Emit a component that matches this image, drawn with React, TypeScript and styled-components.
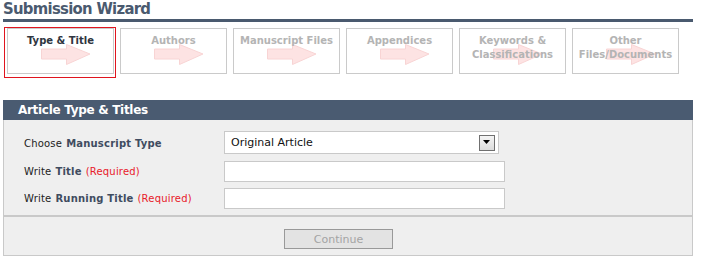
import React from 'react';
import styled, { createGlobalStyle } from 'styled-components';

const GlobalStyle = createGlobalStyle`
  body {
    margin: 0;
    background: #ffffff;
    font-family: 'DejaVu Sans', Verdana, sans-serif;
    font-size: 11px;
  }
`;

const Page = styled.div`
  width: 690px;
  margin-left: 3px;
`;

const Heading = styled.h1`
  margin: 0;
  height: 19px;
  font-family: 'DejaVu Sans Condensed', 'DejaVu Sans', sans-serif;
  font-size: 16.5px;
  line-height: 18px;
  font-weight: bold;
  color: #4a5a6f;
  border-bottom: 3px solid #4a5a6f;
  letter-spacing: -0.7px;
`;

const TabRow = styled.div`
  display: flex;
  gap: 6px;
  padding: 6px 0 0 4px;
  height: 46px;
`;

const Tab = styled.div<{ $active?: boolean }>`
  position: relative;
  box-sizing: border-box;
  width: 107px;
  height: 46px;
  border: 1px solid #cacaca;
  padding-top: 5px;
  text-align: center;
  font-weight: bold;
  font-size: 10px;
  line-height: 14px;
  color: ${(p) => (p.$active ? '#2f3540' : '#b4b4b4')};

  &::before {
    content: '';
    display: ${(p) => (p.$active ? 'block' : 'none')};
    position: absolute;
    left: -4px;
    top: -2px;
    right: -3px;
    bottom: -5px;
    border: 1px solid #e0141e;
  }
`;

const Arrow = styled.svg`
  position: absolute;
  left: 33px;
  top: 15px;
`;

const Label = styled.span`
  position: relative;
`;

const Section = styled.div`
  margin-top: 26px;
  border: 1px solid #c9c9c9;
  border-top: none;
  background: #efefef;
`;

const SectionHeader = styled.div`
  height: 20px;
  margin: 0 -1px;
  padding-left: 15px;
  background: #4a5b71;
  color: #ffffff;
  font-size: 12px;
  font-weight: bold;
  line-height: 20px;
  letter-spacing: -0.3px;
`;

const Form = styled.div`
  display: grid;
  grid-template-columns: 200px auto;
  row-gap: 6px;
  padding: 11px 0 6px 20px;
  border-bottom: 2px solid #c9c9c9;
`;

const FieldLabel = styled.div`
  display: flex;
  align-items: center;
  color: #222;
  font-size: 10px;
  letter-spacing: 0.2px;
`;

const Strong = styled.b`
  color: #3f4c60;
  margin-left: 4px;
`;

const Required = styled.span`
  color: #e8202a;
  margin-left: 4px;
`;

const Select = styled.div`
  box-sizing: border-box;
  display: flex;
  align-items: center;
  justify-content: space-between;
  width: 275px;
  height: 23px;
  margin-bottom: 1px;
  padding: 0 3px 0 6px;
  background: #fff;
  border: 1px solid #c9c9c9;
  font-size: 11px;
  color: #111;
`;

const DropButton = styled.div`
  box-sizing: border-box;
  display: flex;
  align-items: center;
  justify-content: center;
  width: 16px;
  height: 16px;
  border: 1px solid #707070;
  background: linear-gradient(#f4f4f4, #dcdcdc);
`;

const TextInput = styled.div`
  box-sizing: border-box;
  width: 281px;
  height: 21px;
  background: #fff;
  border: 1px solid #c9c9c9;
`;

const Footer = styled.div`
  display: flex;
  justify-content: center;
  padding: 12px 0 6px;
`;

const ContinueButton = styled.button`
  box-sizing: border-box;
  width: 109px;
  height: 20px;
  margin-right: 19px;
  border: 1px solid #999;
  background: #e3e3e3;
  color: #a4a4a4;
  font-family: 'DejaVu Sans', Verdana, sans-serif;
  font-size: 11px;
  padding: 0;
`;

const tabs = [
  ['Type & Title'],
  ['Authors'],
  ['Manuscript Files'],
  ['Appendices'],
  ['Keywords &', 'Classifications'],
  ['Other', 'Files/Documents'],
];

const StepArrow = () => (
  <Arrow width="50" height="21" viewBox="0 0 50 21">
    <path
      d="M0.5 5 H25.5 V0.5 L49 10 L25.5 20.5 V15 H0.5 Z"
      fill="#fde3e3"
      stroke="#f8d4d4"
      strokeWidth="1"
    />
  </Arrow>
);

const App = () => (
  <Page>
    <GlobalStyle />
    <Heading>Submission Wizard</Heading>
    <TabRow>
      {tabs.map((lines, i) => (
        <Tab key={i} $active={i === 0}>
          <StepArrow />
          {lines.map((line) => (
            <div key={line}>
              <Label>{line}</Label>
            </div>
          ))}
        </Tab>
      ))}
    </TabRow>
    <Section>
      <SectionHeader>Article Type &amp; Titles</SectionHeader>
      <Form>
        <FieldLabel>
          Choose<Strong>Manuscript Type</Strong>
        </FieldLabel>
        <Select>
          Original Article
          <DropButton>
            <svg width="8" height="5" viewBox="0 0 8 5">
              <path d="M0 0 H7 L3.5 4 Z" fill="#000" />
            </svg>
          </DropButton>
        </Select>
        <FieldLabel>
          Write<Strong>Title</Strong>
          <Required>(Required)</Required>
        </FieldLabel>
        <TextInput />
        <FieldLabel>
          Write<Strong>Running Title</Strong>
          <Required>(Required)</Required>
        </FieldLabel>
        <TextInput />
      </Form>
      <Footer>
        <ContinueButton>Continue</ContinueButton>
      </Footer>
    </Section>
  </Page>
);

export default App;
